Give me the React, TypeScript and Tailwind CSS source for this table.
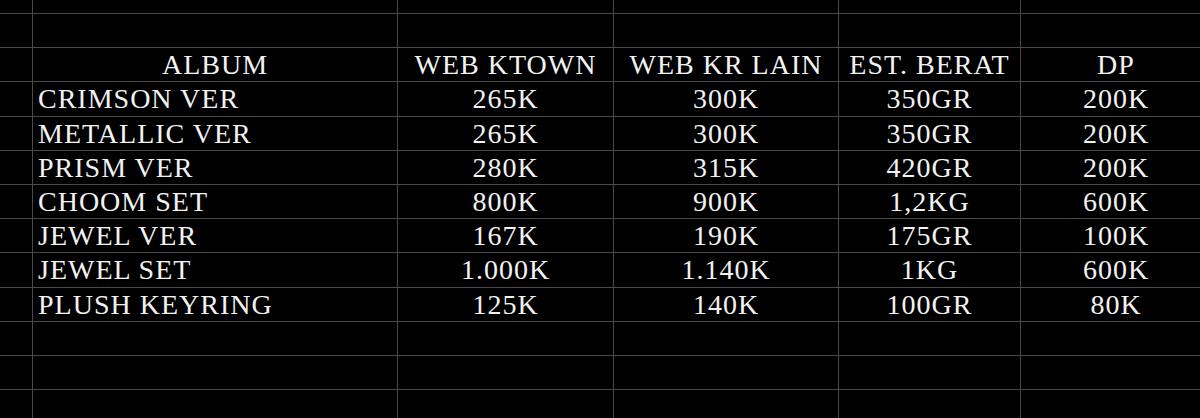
const columns = ['ALBUM', 'WEB KTOWN', 'WEB KR LAIN', 'EST. BERAT', 'DP'];

const rows: string[][] = [
  ['CRIMSON VER', '265K', '300K', '350GR', '200K'],
  ['METALLIC VER', '265K', '300K', '350GR', '200K'],
  ['PRISM VER', '280K', '315K', '420GR', '200K'],
  ['CHOOM SET', '800K', '900K', '1,2KG', '600K'],
  ['JEWEL VER', '167K', '190K', '175GR', '100K'],
  ['JEWEL SET', '1.000K', '1.140K', '1KG', '600K'],
  ['PLUSH KEYRING', '125K', '140K', '100GR', '80K'],
];

const emptyRow = ['', '', '', '', ''];

function Row({ cells, header, tall = true }: { cells: string[]; header?: boolean; tall?: boolean }) {
  const h = tall ? 'h-[33.2px]' : 'h-[13px]';
  return (
    <>
      <div className={`bg-black ${h}`} />
      {cells.map((c, i) => (
        <div
          key={i}
          className={`bg-black ${h} flex items-center whitespace-nowrap overflow-hidden pt-px ${
            i === 0 && !header ? 'justify-start pl-[5px]' : 'justify-center'
          }`}
        >
          {c}
        </div>
      ))}
    </>
  );
}

export default function App() {
  const fillers = [emptyRow, emptyRow, emptyRow];
  return (
    <div
      className="w-[1200px] h-[418px] overflow-hidden bg-black text-[#f2f2f2] text-[28px] tracking-[1px] leading-none"
      style={{ fontFamily: '"Liberation Serif", "Times New Roman", serif' }}
    >
      <div className="grid grid-cols-[32px_364px_215px_224px_181px_190px] gap-px bg-[#4a4a4a] w-[1211px]">
        <Row cells={emptyRow} tall={false} />
        <Row cells={emptyRow} />
        <Row cells={columns} header />
        {rows.map((r, i) => (
          <Row key={i} cells={r} />
        ))}
        {fillers.map((r, i) => (
          <Row key={`f${i}`} cells={r} />
        ))}
      </div>
    </div>
  );
}
